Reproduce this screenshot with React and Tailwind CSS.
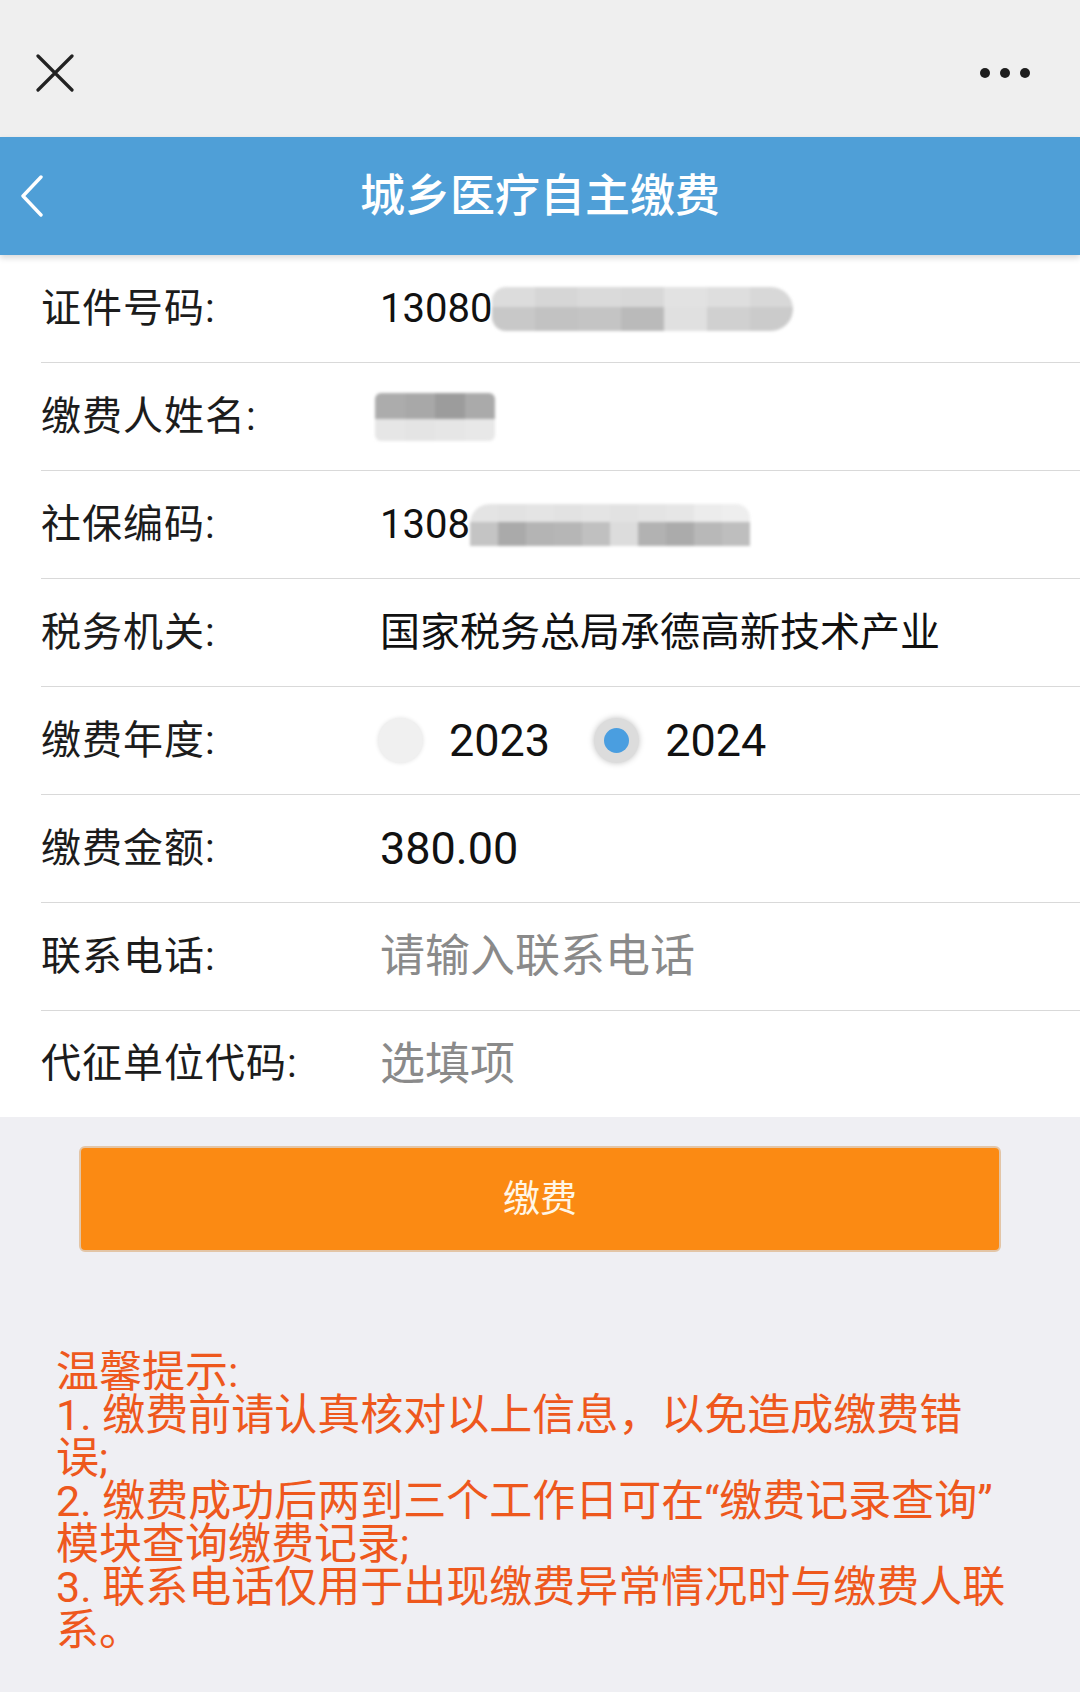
import React from 'react';

const font = { fontFamily: 'Roboto, "Noto Sans CJK SC", sans-serif' };

const Mosaic = ({ top, bottom, cell, topH, bottomH, className }) => (
  <div className={`flex flex-col overflow-hidden blur-[1.5px] ${className}`}>
    <div className="flex">
      {top.map((c, i) => (
        <div key={i} style={{ background: c, width: cell, height: topH }} />
      ))}
    </div>
    <div className="flex">
      {bottom.map((c, i) => (
        <div key={i} style={{ background: c, width: cell, height: bottomH }} />
      ))}
    </div>
  </div>
);

const Row = ({ label, children, last }) => (
  <div className={`ml-[41px] flex items-center ${last ? 'h-[106px]' : 'h-[108px] border-b border-[#d9d9d9]'}`}>
    <div className="w-[339px] text-[40px] tracking-[1px] text-[#1c1c1c] leading-none">{label}</div>
    <div className="flex items-center">{children}</div>
  </div>
);

const Radio = ({ checked }) => (
  <div
    className={`flex h-[45px] w-[45px] items-center justify-center rounded-full ${
      checked
        ? 'bg-[#dcdcdc] shadow-[0_0_6px_rgba(0,0,0,0.25)]'
        : 'bg-[#f0f0f0] shadow-[0_0_4px_rgba(0,0,0,0.12)]'
    }`}
  >
    {checked && <div className="h-[25px] w-[25px] rounded-full bg-[#4a9ee0]" />}
  </div>
);

export default function App() {
  return (
    <div className="min-h-[1692px] w-[1080px] bg-[#efeff3]" style={font}>
      {/* wechat top bar */}
      <div className="flex h-[137px] items-center justify-between bg-[#efefef] pl-[36px] pr-[50px]">
        <svg width="38" height="38" viewBox="0 0 38 38" className="mt-[9px]">
          <path d="M2 2 L36 36 M36 2 L2 36" stroke="#222" strokeWidth="3.2" strokeLinecap="round" />
        </svg>
        <div className="mt-[8px] flex gap-[10px]">
          <div className="h-[10px] w-[10px] rounded-full bg-[#1e1e1e]" />
          <div className="h-[10px] w-[10px] rounded-full bg-[#1e1e1e]" />
          <div className="h-[10px] w-[10px] rounded-full bg-[#1e1e1e]" />
        </div>
      </div>

      {/* title bar */}
      <div className="relative z-10 flex h-[118px] items-center justify-center bg-[#4f9fd7] shadow-[0_3px_6px_rgba(0,0,0,0.15)]">
        <svg width="26" height="42" viewBox="0 0 26 42" className="absolute left-[19px] top-[38px]">
          <path d="M22 2 L4 21 L22 40" stroke="#fff" strokeWidth="3.4" fill="none" strokeLinecap="round" strokeLinejoin="round" />
        </svg>
        <div className="text-[45px] font-medium leading-none text-white">城乡医疗自主缴费</div>
      </div>

      {/* form */}
      <div className="bg-white">
        <Row label="证件号码:">
          <span className="text-[40px] leading-none text-[#111]">13080</span>
          <Mosaic
            className="h-[44px] rounded-r-[22px] rounded-l-[14px]"
            cell={43}
            topH={20}
            bottomH={24}
            top={['#dcdcdc', '#d6d6d6', '#dadada', '#d8d8d8', '#e2e2e2', '#dedede', '#d8d8d8']}
            bottom={['#c8c8c8', '#c2c2c2', '#c4c4c4', '#bababa', '#e0e0e0', '#d0d0d0', '#cbcbcb']}
          />
        </Row>
        <Row label="缴费人姓名:">
          <Mosaic
            className="-ml-[5px] h-[48px] rounded-[6px]"
            cell={30}
            topH={26}
            bottomH={22}
            top={['#acacac', '#a8a8a8', '#9c9c9c', '#aaaaaa']}
            bottom={['#e6e6e6', '#e4e4e4', '#e6e6e6', '#e8e8e8']}
          />
        </Row>
        <Row label="社保编码:">
          <span className="text-[40px] leading-none text-[#111]">1308</span>
          <Mosaic
            className="h-[42px] rounded-tl-[20px] rounded-tr-[14px]"
            cell={28}
            topH={18}
            bottomH={24}
            top={['#e4e4e4', '#e2e2e2', '#e4e4e4', '#e2e2e2', '#e4e4e4', '#e2e2e2', '#e4e4e4', '#e6e6e6', '#ececec', '#eeeeee']}
            bottom={['#c4c4c4', '#aaaaaa', '#b4b4b4', '#b6b6b6', '#c0c0c0', '#dcdcdc', '#b2b2b2', '#ababab', '#b8b8b8', '#bebebe']}
          />
        </Row>
        <Row label="税务机关:">
          <span className="text-[40px] leading-none text-[#111]">国家税务总局承德高新技术产业</span>
        </Row>
        <Row label="缴费年度:">
          <div className="-ml-[2px] flex items-center">
            <Radio />
            <span className="ml-[26px] text-[45px] leading-none text-[#111]">2023</span>
            <div className="ml-[44px]">
              <Radio checked />
            </div>
            <span className="ml-[26px] text-[45px] leading-none text-[#111]">2024</span>
          </div>
        </Row>
        <Row label="缴费金额:">
          <span className="text-[45px] leading-none text-[#111]">380.00</span>
        </Row>
        <Row label="联系电话:">
          <span className="text-[45px] leading-none text-[#8a8a8a]">请输入联系电话</span>
        </Row>
        <Row label="代征单位代码:" last>
          <span className="text-[45px] leading-none text-[#8a8a8a]">选填项</span>
        </Row>
      </div>

      {/* pay button */}
      <div className="px-[79px] pt-[29px]">
        <button className="flex h-[106px] w-full items-center justify-center rounded-[6px] border-2 border-[#e3c5a6] bg-[#fb8a13] text-[37px] leading-none text-[#fff6e6]">
          缴费
        </button>
      </div>

      {/* tips */}
      <div className="pl-[56px] pt-[99px] text-[43px] leading-[43px] text-[#ee581d] whitespace-nowrap">
        <div>温馨提示:</div>
        <div>1. 缴费前请认真核对以上信息，以免造成缴费错</div>
        <div>误;</div>
        <div>2. 缴费成功后两到三个工作日可在“缴费记录查询”</div>
        <div>模块查询缴费记录;</div>
        <div>3. 联系电话仅用于出现缴费异常情况时与缴费人联</div>
        <div>系。</div>
      </div>
    </div>
  );
}
